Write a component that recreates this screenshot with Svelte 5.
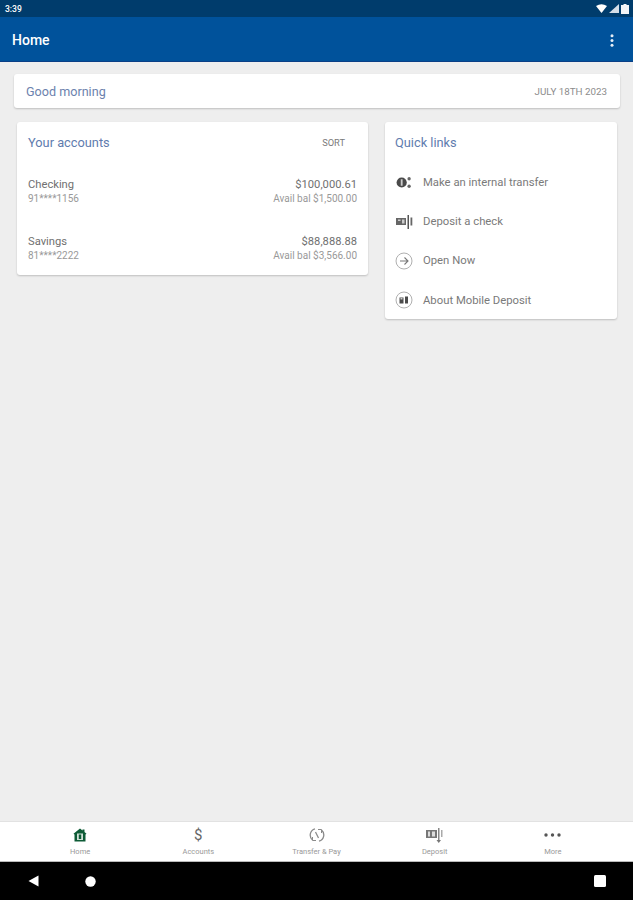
<script>
  const accounts = [
    { name: 'Checking', num: '91****1156', bal: '$100,000.61', avail: 'Avail bal $1,500.00' },
    { name: 'Savings', num: '81****2222', bal: '$88,888.88', avail: 'Avail bal $3,566.00' }
  ]
  const links = ['transfer', 'check', 'open', 'about']
  const labels = {
    transfer: 'Make an internal transfer',
    check: 'Deposit a check',
    open: 'Open Now',
    about: 'About Mobile Deposit'
  }
  const tabs = [
    { id: 'home', label: 'Home' },
    { id: 'accounts', label: 'Accounts' },
    { id: 'pay', label: 'Transfer & Pay' },
    { id: 'deposit', label: 'Deposit' },
    { id: 'more', label: 'More' }
  ]
</script>

<div class="screen">
  <div class="status">
    <span class="time">3:39</span>
    <div class="status-icons">
      <svg width="11" height="9" viewBox="0 0 11 9"><path d="M0 2 Q5.500 -1.500 11 2 L5.500 9 Z" fill="#fff" /></svg>
      <svg width="10" height="9" viewBox="0 0 10 9"><path d="M10 0 V9 H0 Z" fill="#d5dee8" /></svg>
      <svg width="8" height="10" viewBox="0 0 8 10"><path d="M2.500 0 H5.500 V1 H8 V10 H0 V1 H2.500 Z" fill="#f2f5f8" /></svg>
    </div>
  </div>

  <header class="appbar">
    <span class="title">Home</span>
    <svg width="4" height="13" viewBox="0 0 4 13" fill="#e6eef6">
      <circle cx="2" cy="1.800" r="1.500" /><circle cx="2" cy="6.500" r="1.500" /><circle cx="2" cy="11.200" r="1.500" />
    </svg>
  </header>

  <main class="content">
    <section class="greeting">
      <span class="hello">Good morning</span>
      <span class="date">JULY 18TH 2023</span>
    </section>

    <div class="columns">
      <section class="card accounts">
        <div class="card-head">
          <h2>Your accounts</h2>
          <span class="sort">SORT</span>
        </div>
        {#each accounts as a}
          <div class="account">
            <div class="line main-line"><span>{a.name}</span><span class="bal">{a.bal}</span></div>
            <div class="line sub-line"><span>{a.num}</span><span>{a.avail}</span></div>
          </div>
        {/each}
      </section>

      <section class="card links">
        <h2>Quick links</h2>
        <ul>
          {#each links as id}
            <li>
              <span class="link-icon">
                {#if id === 'transfer'}
                  <svg width="16" height="13" viewBox="0 0 17 14">
                    <circle cx="6" cy="7" r="5.500" fill="#4a4a4a" />
                    <rect x="5" y="3.500" width="2" height="7" fill="#ccc" />
                    <circle cx="14" cy="3" r="1.800" fill="#666" />
                    <circle cx="14" cy="11" r="1.800" fill="#666" />
                  </svg>
                {:else if id === 'check'}
                  <svg width="17" height="16" viewBox="0 0 17 16">
                    <rect x="0" y="4" width="10" height="7" fill="#666" />
                    <rect x="2" y="5.500" width="2.500" height="1.500" fill="#ccc" />
                    <rect x="6" y="5.500" width="2.500" height="4" fill="#ccc" />
                    <rect x="11.500" y="1" width="1.500" height="14" fill="#555" />
                    <rect x="14.500" y="3.500" width="1.800" height="8" fill="#666" />
                  </svg>
                {:else if id === 'open'}
                  <svg width="18" height="18" viewBox="0 0 18 18" fill="none">
                    <circle cx="9" cy="9" r="8" stroke="#b0b0b0" />
                    <path d="M5 9 H12.500 M9.500 5.500 L13 9 L9.500 12.500" stroke="#777" stroke-width="1.100" />
                  </svg>
                {:else}
                  <svg width="18" height="18" viewBox="0 0 18 18" fill="none">
                    <circle cx="9" cy="9" r="8" stroke="#b0b0b0" />
                    <rect x="4.500" y="6.500" width="4" height="6" fill="#4a4a4a" />
                    <rect x="10" y="5.500" width="3" height="7" fill="#4a4a4a" />
                    <rect x="5.500" y="7" width="2" height="1.500" fill="#ccc" />
                  </svg>
                {/if}
              </span>
              <span>{labels[id]}</span>
            </li>
          {/each}
        </ul>
      </section>
    </div>
  </main>

  <nav class="tabs">
    {#each tabs as t}
      <div class="tab" class:active={t.id === 'home'}>
        <span class="tab-icon">
          {#if t.id === 'home'}
            <svg width="14" height="14" viewBox="0 0 14 14">
              <path d="M7 0.500 L9.500 2.500 V1.500 H11.500 V4 L13.500 5.800 L12.500 6.500 V13.500 H1.500 V6.500 L0.500 5.800 Z" fill="#0d5b36" />
              <rect x="4" y="5.500" width="6" height="6.500" fill="#cfe0d6" />
              <rect x="5.800" y="6.500" width="2.400" height="4.500" fill="#0d5b36" />
            </svg>
          {:else if t.id === 'accounts'}
            <span class="dollar">$</span>
          {:else if t.id === 'pay'}
            <svg width="16" height="16" viewBox="0 0 16 16" fill="none" stroke="#8a8a8a" stroke-width="1.300">
              <path d="M3.500 13 A6.500 6.500 0 0 1 6 1.800" />
              <path d="M12.500 3 A6.500 6.500 0 0 1 10 14.200" />
              <path d="M6.500 5 L9.500 11" />
              <path d="M3.500 10 V13.500 H7 M12.500 6 V2.500 H9" stroke-width="1" />
            </svg>
          {:else if t.id === 'deposit'}
            <svg width="17" height="15" viewBox="0 0 17 15">
              <rect x="0" y="2" width="11" height="8" fill="#777" />
              <rect x="2" y="3.500" width="2" height="5" fill="#ddd" />
              <rect x="6" y="3.500" width="3" height="5" fill="#ddd" />
              <rect x="12" y="0" width="1.500" height="12" fill="#888" />
              <rect x="15" y="2" width="1.500" height="7" fill="#aaa" />
              <path d="M10.500 12 H15 L12.750 15 Z" fill="#777" />
            </svg>
          {:else}
            <svg width="17" height="4" viewBox="0 0 17 4" fill="#555">
              <circle cx="2" cy="2" r="1.700" /><circle cx="8.500" cy="2" r="1.700" /><circle cx="15" cy="2" r="1.700" />
            </svg>
          {/if}
        </span>
        <span class="tab-label">{t.label}</span>
      </div>
    {/each}
  </nav>

  <div class="sysnav">
    <svg width="11" height="12" viewBox="0 0 11 12"><path d="M0.500 6 L10.500 0.500 V11.500 Z" fill="#fff" /></svg>
    <svg width="11" height="11" viewBox="0 0 11 11"><circle cx="5.500" cy="5.500" r="5.200" fill="#fff" /></svg>
    <svg class="recents" width="12" height="12" viewBox="0 0 12 12"><rect width="12" height="12" rx="1.500" fill="#fff" /></svg>
  </div>
</div>

<style>
  :global(body) {
    margin: 0;
    background: #eeeeee;
  }

  .screen {
    display: flex;
    flex-direction: column;
    width: 633px;
    height: 900px;
    overflow: hidden;
    font-family: Roboto, "Liberation Sans", sans-serif;
    color: #777;
  }

  .status {
    display: flex;
    align-items: center;
    justify-content: space-between;
    height: 17px;
    padding: 0 4px 0 5px;
    background: #003c6c;
    color: #fff;
  }

  .time {
    font-size: 8.500px;
    font-weight: 500;
  }

  .status-icons {
    display: flex;
    align-items: center;
    gap: 2px;
  }

  .appbar {
    display: flex;
    align-items: center;
    justify-content: space-between;
    box-sizing: border-box;
    height: 45px;
    padding: 2px 19px 0 12px;
    background: #00529b;
    border-bottom: 1px solid #0a3f86;
  }

  .title {
    font-size: 14px;
    font-weight: 500;
    color: #fff;
  }

  .content {
    flex: 1;
    padding: 12px 16px 0 14px;
    background: #eeeeee;
  }

  .greeting {
    display: flex;
    align-items: center;
    justify-content: space-between;
    height: 34px;
    margin-right: -3px;
    padding: 0 13px 0 12px;
    background: #fff;
    border-radius: 3px;
    box-shadow: 0 1px 2px rgba(0, 0, 0, 0.2);
  }

  .hello {
    font-size: 12.600px;
    color: #6c82ad;
  }

  .date {
    font-size: 9.800px;
    color: #8c8c8c;
  }

  .columns {
    display: flex;
    align-items: flex-start;
    gap: 17px;
    margin: 14px 0 0 3px;
  }

  .card {
    background: #fff;
    border-radius: 3px;
    box-shadow: 0 1px 2px rgba(0, 0, 0, 0.2);
  }

  .accounts {
    width: 351px;
    height: 153px;
    box-sizing: border-box;
    padding: 0 11px;
  }

  .card-head {
    display: flex;
    justify-content: space-between;
    align-items: center;
    height: 41px;
    margin-bottom: 14px;
  }

  h2 {
    margin: 0;
    font-size: 12.800px;
    font-weight: 400;
    color: #5f7cae;
  }

  .sort {
    margin-right: 12px;
    font-size: 9.300px;
    color: #7a7a7a;
  }

  .account {
    height: 57px;
  }

  .line {
    display: flex;
    justify-content: space-between;
  }

  .main-line {
    font-size: 11.200px;
    line-height: 15px;
    color: #707070;
  }

  .sub-line {
    font-size: 10px;
    line-height: 13px;
    color: #999;
  }

  .links {
    width: 232px;
    height: 197px;
    box-sizing: border-box;
    padding: 13px 11px 0 10px;
  }

  ul {
    list-style: none;
    margin: 13px 0 0;
    padding: 0;
  }

  li {
    display: flex;
    align-items: center;
    gap: 10px;
    height: 39.200px;
    font-size: 11.300px;
    color: #7a7a7a;
  }

  .link-icon {
    display: flex;
    justify-content: center;
    width: 18px;
  }

  .tabs {
    display: flex;
    height: 39px;
    padding: 0 21px;
    background: #fff;
    border-top: 1px solid #e2e2e2;
    border-bottom: 1px solid #bbb;
  }

  .tab {
    flex: 1;
    display: flex;
    flex-direction: column;
    align-items: center;
  }

  .tab-icon {
    display: flex;
    align-items: center;
    justify-content: center;
    height: 20px;
    margin-top: 3px;
  }

  .dollar {
    font-size: 15px;
    color: #666;
  }

  .tab-label {
    font-size: 7.500px;
    line-height: 10px;
    margin-top: 2px;
    color: #999;
  }

  .sysnav {
    display: flex;
    align-items: center;
    gap: 46px;
    height: 38px;
    padding: 0 27px 0 28px;
    background: #000;
  }

  .recents {
    margin-left: auto;
  }
</style>
